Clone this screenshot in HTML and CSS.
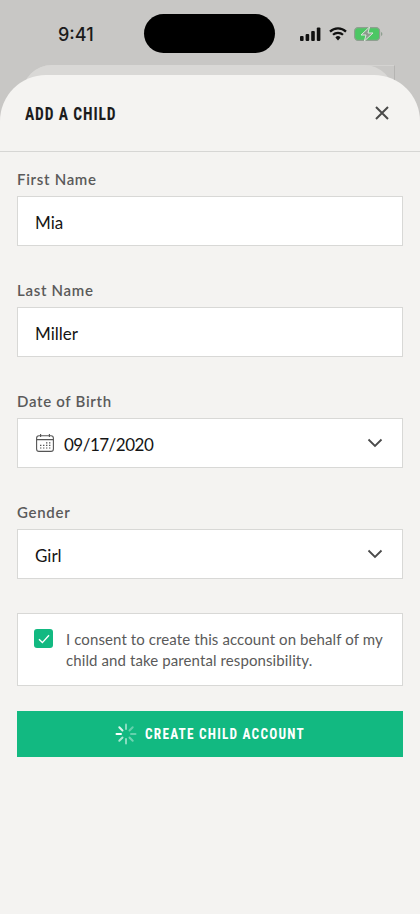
FILE: index.html
```html
<!DOCTYPE html>
<html lang="en">

<head>
    <meta charset="UTF-8">
    <meta name="viewport" content="width=device-width, initial-scale=1.0">
    <title>Add a Child</title>
    <link rel="stylesheet" href="styles.css">
</head>

<body>
    <div class="status">
        <span class="time">9:41</span>
        <div class="island"></div>
        <div class="status-icons">
            <svg width="22" height="14" viewBox="0 0 22 14">
                <rect x="0" y="9" width="3.6" height="5" rx="1" fill="#111" />
                <rect x="5.6" y="7" width="3.6" height="7" rx="1" fill="#111" />
                <rect x="11.2" y="4" width="3.6" height="10" rx="1" fill="#111" />
                <rect x="16.8" y="0.5" width="3.6" height="13.5" rx="1" fill="#111" />
            </svg>
            <svg width="18" height="14" viewBox="0 0 18 14">
                <path d="M1 4.6a11.4 11.4 0 0 1 16 0" fill="none" stroke="#111" stroke-width="2.2" />
                <path d="M4 7.8a7.2 7.2 0 0 1 10 0" fill="none" stroke="#111" stroke-width="2.2" />
                <path d="M6.4 10.4a3.6 3.6 0 0 1 5.2 0L9 13.4z" fill="#111" />
            </svg>
            <svg width="29" height="14" viewBox="0 0 29 14">
                <rect x="0.6" y="0.6" width="25" height="12.8" rx="3.6" fill="#4cc764" stroke="#8f9f90" stroke-width="1.2" />
                <path d="M27 5v4a2 2 0 0 0 1.4-2A2 2 0 0 0 27 5z" fill="#8f9f90" />
                <path d="M15.5 0 7 8h5l-1.6 6L19 6h-5z" fill="#8d9a8e" stroke="#d8e8da" stroke-width="1" />
            </svg>
        </div>
    </div>

    <div class="back-sheet"></div>

    <div class="sheet">
        <div class="sheet-head">
            <h1 class="title"><span class="title-text">ADD A CHILD</span></h1>
            <svg class="close" width="16" height="16" viewBox="0 0 16 16">
                <path d="M2 2l12 12M14 2L2 14" fill="none" stroke="#4a4a4a" stroke-width="2" />
            </svg>
        </div>

        <form class="form">
            <div class="field">
                <label class="label">First Name</label>
                <div class="box"><span class="value">Mia</span></div>
            </div>
            <div class="field">
                <label class="label">Last Name</label>
                <div class="box"><span class="value">Miller</span></div>
            </div>
            <div class="field">
                <label class="label">Date of Birth</label>
                <div class="box">
                    <svg class="cal" width="20" height="20" viewBox="0 0 20 20">
                        <rect x="1.6" y="2.8" width="16.8" height="15.6" rx="2.4" fill="none" stroke="#555" stroke-width="1.1" />
                        <path d="M1.6 6.6h16.8M5.6 1v3M14.4 1v3" fill="none" stroke="#555" stroke-width="1.1" />
                        <path d="M5 15h1.4M8 15h1.4M11 15h1.4M14 15h1.4M5 12.4h1.4M8 12.4h1.4M11 12.4h1.4M14 12.4h1.4M11 9.8h1.4M14 9.8h1.4" fill="none" stroke="#555" stroke-width="1.2" />
                    </svg>
                    <span class="value date">09/17/2020</span>
                    <svg class="chev" width="16" height="10" viewBox="0 0 16 10">
                        <path d="M1.5 1.5 8 8l6.5-6.5" fill="none" stroke="#4a4a4a" stroke-width="1.8" />
                    </svg>
                </div>
            </div>
            <div class="field">
                <label class="label">Gender</label>
                <div class="box">
                    <span class="value">Girl</span>
                    <svg class="chev" width="16" height="10" viewBox="0 0 16 10">
                        <path d="M1.5 1.5 8 8l6.5-6.5" fill="none" stroke="#4a4a4a" stroke-width="1.8" />
                    </svg>
                </div>
            </div>

            <div class="consent">
                <div class="check">
                    <svg width="12" height="10" viewBox="0 0 12 10">
                        <path d="M1 5.2 4.4 8.6 11 1.2" fill="none" stroke="#fff" stroke-width="1.4" />
                    </svg>
                </div>
                <p class="consent-text">I consent to create this account on behalf of my child and take parental responsibility.</p>
            </div>

            <button class="create" type="button">
                <svg width="22" height="22" viewBox="0 0 22 22">
                    <g fill="none" stroke="#fff" stroke-width="2" stroke-linecap="round">
                        <path d="M11 1.5v4.5" opacity="0.5" />
                        <path d="M17.7 4.3l-3.2 3.2" opacity="0.35" />
                        <path d="M20.5 11H16" opacity="0.35" />
                        <path d="M17.7 17.7l-3.2-3.2" opacity="0.4" />
                        <path d="M11 20.5V16" opacity="0.5" />
                        <path d="M4.3 17.7l3.2-3.2" opacity="0.65" />
                        <path d="M1.5 11H6" opacity="1" />
                        <path d="M4.3 4.3l3.2 3.2" opacity="0.85" />
                    </g>
                </svg>
                <span class="create-text">CREATE CHILD ACCOUNT</span>
            </button>
        </form>
    </div>
</body>

</html>
```

FILE: styles.css
```css
* {
    box-sizing: border-box;
}

body {
    margin: 0;
    height: 914px;
    overflow: hidden;
    display: flex;
    flex-direction: column;
    background-color: #c8c7c5;
    font-family: 'Lato', 'Liberation Sans', sans-serif;
}

.status {
    height: 65px;
    padding: 14px 37px 0 58px;
    display: flex;
    align-items: flex-start;
}

.time {
    width: 86px;
    margin-top: 8px;
    font-family: 'Inter', sans-serif;
    font-size: 18px;
    font-weight: 500;
    line-height: 26px;
    color: #1a1a1a;
}

.island {
    width: 132px;
    height: 39px;
    border-radius: 20px;
    background-color: #000;
}

.status-icons {
    margin-left: 25px;
    margin-top: 13px;
    display: flex;
    align-items: center;
    gap: 7px;
}

.back-sheet {
    height: 30px;
    margin: 0 25px -20px 22px;
    position: relative;
    border-radius: 30px 0 0 0;
    border-top: 1px solid #d4d3d1;
    border-right: 1px solid #b5b4b2;
    background-color: #c9c8c6;
}

.back-sheet::before {
    content: "";
    position: absolute;
    top: -1px;
    left: 0;
    right: 0;
    bottom: 0;
    border-radius: 30px 30px 0 0;
    background-color: #d9d8d6;
}

.sheet {
    flex: 1;
    position: relative;
    border-radius: 46px 46px 0 0;
    background-color: #f4f3f1;
}

.sheet-head {
    height: 77px;
    padding: 0 30px 0 25px;
    display: flex;
    align-items: center;
    justify-content: space-between;
    border-bottom: 1px solid #d6d6d4;
}

.title {
    margin: 1px 0 0;
    font-family: 'Roboto', sans-serif;
    font-size: 18.5px;
    font-weight: 700;
    font-stretch: 75%;
    letter-spacing: 1px;
    color: #1c1c1c;
}

.title-text {
    display: inline-block;
    transform: scaleX(0.84);
    transform-origin: left center;
}

.form {
    padding: 17px 17px 0;
    display: flex;
    flex-direction: column;
}

.field {
    height: 111px;
}

.label {
    display: block;
    height: 20px;
    margin-bottom: 7px;
    font-size: 15px;
    font-weight: 600;
    letter-spacing: 0.7px;
    line-height: 20px;
    color: #5a5a5a;
}

.box {
    height: 50px;
    padding: 0 19px 0 17px;
    display: flex;
    align-items: center;
    border: 1px solid #d8d8d6;
    background-color: #fff;
    font-size: 17px;
    color: #151515;
}

.value {
    padding-top: 2px;
}

.date {
    letter-spacing: -0.5px;
}

.cal {
    margin-right: 9px;
}

.chev {
    margin-left: auto;
}

.consent {
    height: 73px;
    padding: 0 16px;
    display: flex;
    align-items: flex-start;
    gap: 13px;
    border: 1px solid #d8d8d6;
    background-color: #fff;
}

.check {
    flex: none;
    width: 19px;
    height: 19px;
    margin-top: 15px;
    display: flex;
    align-items: center;
    justify-content: center;
    border-radius: 3px;
    background-color: #12b981;
}

.consent-text {
    margin: 15px 0 0;
    font-size: 15px;
    letter-spacing: 0.1px;
    line-height: 21px;
    color: #5a5a5a;
}

.create {
    height: 46px;
    margin-top: 25px;
    display: flex;
    align-items: center;
    justify-content: center;
    gap: 8px;
    border: 0;
    background-color: #12b981;
    color: #fff;
    font-family: 'Roboto', sans-serif;
    font-size: 15.5px;
    font-weight: 700;
    font-stretch: 75%;
    letter-spacing: 1.4px;
}

.create-text {
    margin: 0 -13px;
    transform: scaleX(0.86);
}
```
